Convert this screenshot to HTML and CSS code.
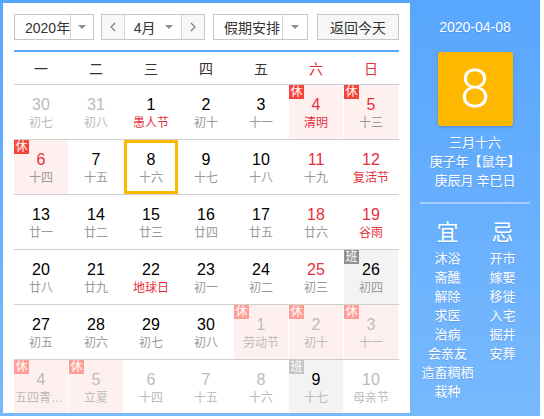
FILE: index.html
```html
<!DOCTYPE html>
<html lang="zh-CN">
<head>
<meta charset="utf-8">
<title>万年历</title>
<link rel="stylesheet" href="styles.css">
</head>
<body>
<div class="cal">
  <div class="main">
    <div class="toolbar">
      <div class="sel year"><span class="txt">2020年</span><span class="arr"><i class="tri"></i></span></div>
      <div class="mgroup">
        <span class="nav"><svg width="6" height="10" viewBox="0 0 6 10"><path d="M5 1 1 5l4 4" fill="none" stroke="#777" stroke-width="1.1"/></svg></span>
        <span class="month"><span class="txt">4月</span><i class="tri"></i></span>
        <span class="nav"><svg width="6" height="10" viewBox="0 0 6 10"><path d="M1 1l4 4-4 4" fill="none" stroke="#777" stroke-width="1.1"/></svg></span>
      </div>
      <div class="sel hol"><span class="txt">假期安排</span><span class="arr"><i class="tri"></i></span></div>
      <div class="btn">返回今天</div>
    </div>
    <div class="weekhead">
      <span>一</span><span>二</span><span>三</span><span>四</span><span>五</span><span class="we">六</span><span class="we">日</span>
    </div>
    <div class="weeks">
      <div class="week">
        <div class="cell other"><div class="n">30</div><div class="l">初七</div></div>
        <div class="cell other"><div class="n">31</div><div class="l">初八</div></div>
        <div class="cell fest"><div class="n">1</div><div class="l">愚人节</div></div>
        <div class="cell"><div class="n">2</div><div class="l">初十</div></div>
        <div class="cell"><div class="n">3</div><div class="l">十一</div></div>
        <div class="cell rest red fest"><span class="badge">休</span><div class="n">4</div><div class="l">清明</div></div>
        <div class="cell rest red"><span class="badge">休</span><div class="n">5</div><div class="l">十三</div></div>
      </div>
      <div class="week">
        <div class="cell rest red"><span class="badge">休</span><div class="n">6</div><div class="l">十四</div></div>
        <div class="cell"><div class="n">7</div><div class="l">十五</div></div>
        <div class="cell selected"><div class="n">8</div><div class="l">十六</div></div>
        <div class="cell"><div class="n">9</div><div class="l">十七</div></div>
        <div class="cell"><div class="n">10</div><div class="l">十八</div></div>
        <div class="cell red"><div class="n">11</div><div class="l">十九</div></div>
        <div class="cell red fest"><div class="n">12</div><div class="l">复活节</div></div>
      </div>
      <div class="week">
        <div class="cell"><div class="n">13</div><div class="l">廿一</div></div>
        <div class="cell"><div class="n">14</div><div class="l">廿二</div></div>
        <div class="cell"><div class="n">15</div><div class="l">廿三</div></div>
        <div class="cell"><div class="n">16</div><div class="l">廿四</div></div>
        <div class="cell"><div class="n">17</div><div class="l">廿五</div></div>
        <div class="cell red"><div class="n">18</div><div class="l">廿六</div></div>
        <div class="cell red fest"><div class="n">19</div><div class="l">谷雨</div></div>
      </div>
      <div class="week">
        <div class="cell"><div class="n">20</div><div class="l">廿八</div></div>
        <div class="cell"><div class="n">21</div><div class="l">廿九</div></div>
        <div class="cell fest"><div class="n">22</div><div class="l">地球日</div></div>
        <div class="cell"><div class="n">23</div><div class="l">初一</div></div>
        <div class="cell"><div class="n">24</div><div class="l">初二</div></div>
        <div class="cell red"><div class="n">25</div><div class="l">初三</div></div>
        <div class="cell work"><span class="badge">班</span><div class="n">26</div><div class="l">初四</div></div>
      </div>
      <div class="week">
        <div class="cell"><div class="n">27</div><div class="l">初五</div></div>
        <div class="cell"><div class="n">28</div><div class="l">初六</div></div>
        <div class="cell"><div class="n">29</div><div class="l">初七</div></div>
        <div class="cell"><div class="n">30</div><div class="l">初八</div></div>
        <div class="cell rest other"><span class="badge">休</span><div class="n">1</div><div class="l">劳动节</div></div>
        <div class="cell rest other"><span class="badge">休</span><div class="n">2</div><div class="l">初十</div></div>
        <div class="cell rest other"><span class="badge">休</span><div class="n">3</div><div class="l">十一</div></div>
      </div>
      <div class="week last">
        <div class="cell rest other"><span class="badge">休</span><div class="n">4</div><div class="l">五四青年节</div></div>
        <div class="cell rest other"><span class="badge">休</span><div class="n">5</div><div class="l">立夏</div></div>
        <div class="cell other"><div class="n">6</div><div class="l">十四</div></div>
        <div class="cell other"><div class="n">7</div><div class="l">十五</div></div>
        <div class="cell other"><div class="n">8</div><div class="l">十六</div></div>
        <div class="cell work other-work"><span class="badge">班</span><div class="n">9</div><div class="l">十七</div></div>
        <div class="cell other"><div class="n">10</div><div class="l">母亲节</div></div>
      </div>
    </div>
  </div>
  <div class="side">
    <div class="date">2020-04-08</div>
    <div class="big">8</div>
    <div class="lunar">
      <div>三月十六</div>
      <div>庚子年【鼠年】</div>
      <div>庚辰月 辛巳日</div>
    </div>
    <div class="sep"></div>
    <div class="yj">
      <div class="col">
        <div class="h">宜</div>
        <div>沐浴</div><div>斋醮</div><div>解除</div><div>求医</div><div>治病</div><div>会亲友</div><div>造畜稠栖</div><div>栽种</div>
      </div>
      <div class="col">
        <div class="h">忌</div>
        <div>开市</div><div>嫁娶</div><div>移徙</div><div>入宅</div><div>掘井</div><div>安葬</div>
      </div>
    </div>
  </div>
</div>
</body>
</html>
```
FILE: styles.css
```css
* { box-sizing: border-box; }
body {
  margin: 0;
  background: #fff;
  font-family: "Liberation Sans", "Noto Sans CJK SC", sans-serif;
}
.cal {
  display: flex;
  width: 540px;
  height: 416px;
  padding: 3px 0 3px 3px;
  background: linear-gradient(#58a6fe, #78b9fd);
}
.main {
  width: 407px;
  height: 410px;
  background: #fff;
  padding: 11px 11px 0 11px;
  overflow: hidden;
}
.toolbar {
  display: flex;
  height: 26px;
  margin-bottom: 10px;
  font-size: 14px;
  color: #333;
}
.sel, .mgroup, .btn {
  border: 1px solid #c6c6c6;
  height: 26px;
  display: flex;
  align-items: center;
}
.sel .txt {
  flex: 1;
  padding-left: 10px;
  white-space: nowrap;
}
.sel .arr {
  width: 25px;
  height: 100%;
  border-left: 1px solid #d6d6d6;
  display: flex;
  align-items: center;
  justify-content: center;
}
.tri {
  display: block;
  width: 0;
  height: 0;
  border-left: 4px solid transparent;
  border-right: 4px solid transparent;
  border-top: 4px solid #8d8d8d;
}
.year { width: 80px; }
.mgroup { width: 104px; margin-left: 7px; }
.hol { width: 95px; margin-left: 8px; }
.hol .txt { padding-left: 10px; }
.btn {
  width: 82px;
  margin-left: 9px;
  justify-content: center;
  background: #f7f7f7;
}
.nav {
  width: 22px;
  height: 100%;
  background: #f7f7f7;
  display: flex;
  align-items: center;
  justify-content: center;
}
.month {
  width: 59px;
  height: 100%;
  border-left: 1px solid #d6d6d6;
  border-right: 1px solid #d6d6d6;
  display: flex;
  align-items: center;
  padding: 0 8px 0 9px;
}
.month .txt { flex: 1; }
.weekhead {
  display: grid;
  grid-template-columns: repeat(7, 54px);
  column-gap: 1px;
  height: 35px;
  border-top: 2px solid #58a6fe;
  border-bottom: 1px solid #cfcfcf;
  align-items: center;
  font-size: 14px;
  color: #333;
  text-align: center;
}
.weekhead .we { color: #e5303a; }
.week {
  display: grid;
  grid-template-columns: repeat(7, 54px);
  column-gap: 1px;
  height: 55px;
  border-bottom: 1px solid #cfcfcf;
}
.week.last { height: 53px; border-bottom: none; }
.cell {
  position: relative;
  text-align: center;
  padding: 10px 1px 0;
}
.n {
  font-size: 16px;
  line-height: 20px;
  color: #000;
}
.l {
  font-size: 12px;
  line-height: 16px;
  color: #999;
  white-space: nowrap;
  overflow: hidden;
  text-overflow: ellipsis;
}
.red .n { color: #e5303a; }
.fest .l { color: #e5303a; }
.other .n, .other .l { color: #bbb; }
.rest { background: #fff0f0; }
.work { background: #f3f3f3; }
.selected { box-shadow: inset 0 0 0 3px #ffb800; }
.badge {
  position: absolute;
  left: 0;
  top: 0;
  width: 15px;
  height: 14px;
  font-size: 12px;
  line-height: 14px;
  color: #fff;
  text-align: center;
  background: #f8433a;
}
.rest.other .badge { background: #ff9d96; }
.work .badge { background: #929292; }
.other-work .badge { background: #c6c6c6; }
.other-work .l { color: #bbb; }
.side {
  width: 130px;
  color: #fff;
  display: flex;
  flex-direction: column;
  align-items: center;
  padding-top: 14px;
  text-shadow: 0 1px 1px rgba(0, 40, 120, 0.15);
}
.date {
  font-size: 14px;
  line-height: 20px;
}
.big {
  margin-top: 15px;
  width: 75px;
  height: 74px;
  border-radius: 3px;
  background: #ffb800;
  box-shadow: 0 1px 3px rgba(0, 0, 0, 0.2);
  font-family: Roboto, "Liberation Sans", sans-serif;
  font-weight: 300;
  font-size: 54px;
  line-height: 74px;
  text-align: center;
  text-shadow: none;
}
.lunar {
  margin-top: 6px;
  font-size: 13px;
  line-height: 19px;
  text-align: center;
  font-family: "Noto Sans CJK SC", sans-serif;
}
.sep {
  width: 110px;
  height: 2px;
  margin-top: 13px;
  background: #a3cfff;
}
.yj {
  display: flex;
  margin-top: 11px;
  font-family: "Noto Sans CJK SC", sans-serif;
}
.col {
  width: 55px;
  text-align: center;
  font-size: 13px;
  line-height: 19px;
  white-space: nowrap;
}
.col .h {
  font-size: 22px;
  line-height: 30px;
  margin-bottom: 3px;
}
```
